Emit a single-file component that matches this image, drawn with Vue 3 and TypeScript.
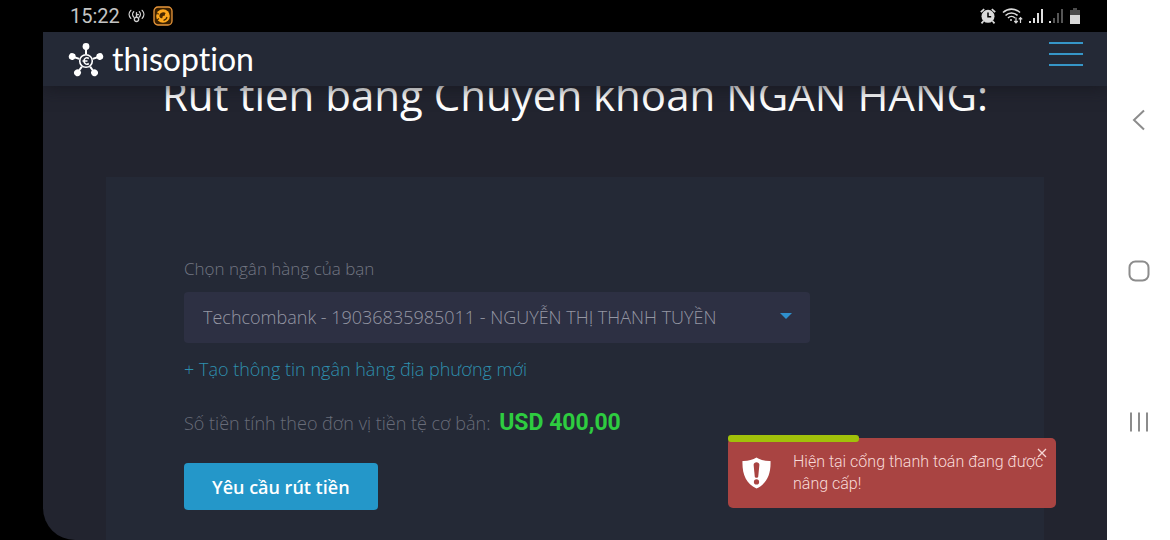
<script setup lang="ts">
import { ref } from 'vue'

const banks: string[] = ['Techcombank - 19036835985011 - NGUYỄN THỊ THANH TUYỀN']
const bank = ref<string>(banks[0])
const toastOpen = ref<boolean>(true)
const progress = ref<number>(40)
const spokes: number[] = [0, 72, 144, 216, 288]
</script>

<template>
  <div class="device">
    <div class="screen">
      <div class="status">
        <div class="status-group">
          <span class="clock">15:22</span>
          <svg class="ico-cast" viewBox="0 0 18 16" fill="none" stroke="#d0d0d0" stroke-width="1.4" stroke-linecap="round">
            <path d="M3 2C.6 4.500.6 8 3 10.500M6 3.500C4.500 5 4.500 7.500 6 9M15 2c2.400 2.500 2.400 6 0 8.500M12 3.500c1.500 1.500 1.500 4 0 5.500M9 4.500V9M9 6.500h2" />
            <circle cx="9" cy="11.500" r="2.300" />
          </svg>
          <svg class="ico-app" viewBox="0 0 20 20" fill="none">
            <rect x="1" y="1" width="18" height="18" rx="4" fill="#3a2000" stroke="#e8963a" stroke-width="1.300" />
            <circle cx="10" cy="10" r="6.800" fill="#ffa81c" />
            <path d="M6.500 9c1-2.500 4-3.500 6.500-1.800-1.500.3-1 1.500-1 2.300-2 0-3 1-2.500 2.500-1.800.8-3.600-.8-3-3z" fill="#4a2900" />
            <path d="M3 7.500l3 .5M14 11c-.5 2-1.500 3-3.500 3.300M4 14l2-1.500" stroke="#4a2900" stroke-width="1.200" />
          </svg>
        </div>
        <div class="status-group right">
          <svg class="ico-alarm" viewBox="0 0 16 16" fill="none" stroke="#dadada">
            <path d="M.8 4.200l3.400-3M15.200 4.200l-3.400-3M3.500 13l-2 2.300M12.500 13l2 2.300" stroke-width="1.800" />
            <circle cx="8" cy="8.300" r="6.500" fill="#dadada" stroke="none" />
            <path d="M8 4.500v4.200h3.200" stroke="#000" stroke-width="1.500" />
          </svg>
          <svg class="ico-wifi" viewBox="0 0 21 16" fill="none" stroke="#dadada" stroke-width="1.600">
            <path d="M1 4.500c5-4.500 12-4.500 17 0M3.500 7.500c3.500-3.400 8.500-3.400 12 0M6 10c2-2 5-2 7 0" />
            <circle cx="9" cy="12" r="1" fill="#dadada" stroke="none" />
            <path d="M14 9.500v5M12.300 13l1.700 1.800L15.700 13M18.500 15V9.500M16.800 11.300l1.700-1.800 1.700 1.800" stroke-width="1.200" />
          </svg>
          <svg class="ico-signal" viewBox="0 0 14 16" fill="#e0e0e0">
            <path d="M0 13h2v2H0zM4 10h2v5H4zM8 5h2v10H8zM12 1h2v14h-2z" />
          </svg>
          <svg class="ico-signal" viewBox="0 0 14 16" fill="#555">
            <path d="M0 13h2v2H0z" fill="#ddd" />
            <path d="M4 10h2v5H4zM8 5h2v10H8zM12 1h2v14h-2z" />
          </svg>
          <svg class="ico-battery" viewBox="0 0 12 16">
            <path d="M4 0h4v2h3v5H1V2h3z" fill="#4c4c4c" />
            <path d="M1 7h10v9H1z" fill="#d8d8d8" />
          </svg>
        </div>
      </div>

      <div class="app">
        <header class="topbar">
          <a class="brand" href="#">
            <svg class="mark" viewBox="0 0 36 36" fill="none">
              <g v-for="a in spokes" :key="a" :transform="`rotate(${a} 18 20)`">
                <path d="M18 7v6" stroke="#fff" stroke-width="2" />
                <circle cx="18" cy="5.500" r="3.400" fill="#fff" />
              </g>
              <circle cx="18" cy="20" r="6.300" fill="#242936" stroke="#fff" stroke-width="1.600" />
              <path d="M20.800 17.500c-2.300-1.600-4.800-.2-4.800 2.500s2.500 4.100 4.800 2.500M14.500 20h5" stroke="#fff" stroke-width="1.600" />
            </svg>
            <span>thisoption</span>
          </a>
          <button class="menu" type="button" aria-label="Menu"><i></i><i></i><i></i></button>
        </header>

        <main class="content">
          <h1>Rút tiền bằng Chuyển khoản NGÂN HÀNG:</h1>
          <form class="card" @submit.prevent>
            <label for="bank">Chọn ngân hàng của bạn</label>
            <div class="select-wrap">
              <select id="bank" v-model="bank">
                <option v-for="b in banks" :key="b" :value="b">{{ b }}</option>
              </select>
              <svg class="caret" viewBox="0 0 12 6"><path d="M0 0h12L6 6z" fill="#2f8fcc" /></svg>
            </div>
            <a class="add" href="#">+ Tạo thông tin ngân hàng địa phương mới</a>
            <p class="amount">Số tiền tính theo đơn vị tiền tệ cơ bản: <strong>USD 400,00</strong></p>
            <button class="submit" type="submit">Yêu cầu rút tiền</button>
          </form>
        </main>
      </div>

      <div v-if="toastOpen" class="toast" role="alert">
        <div class="progress" :style="{ width: progress + '%' }"></div>
        <svg class="shield" viewBox="0 0 30 32">
          <path d="M15 0c4 2.500 9 3.700 14.500 3.500C30 17 26 27 15 32 4 27 0 17 .5 3.500 6 3.700 11 2.500 15 0z" fill="#fff" />
          <path d="M12 7.500c0-3.500 6-3.500 6 0l-1.200 12c-.3 2-3.300 2-3.600 0z" fill="#a94442" />
          <circle cx="15" cy="25.200" r="2.700" fill="#a94442" />
        </svg>
        <p>Hiện tại cổng thanh toán đang được nâng cấp!</p>
        <button class="close" type="button" aria-label="Đóng" @click="toastOpen = false">
          <svg viewBox="0 0 10 10" fill="none" stroke="#f6d5d3" stroke-width="1.300"><path d="M1 1l8 8M9 1L1 9" /></svg>
        </button>
      </div>
    </div>

    <nav class="softkeys">
      <button type="button" aria-label="Quay lại">
        <svg viewBox="0 0 24 24"><path d="M17 2.500L7 12l10 9.500" /></svg>
      </button>
      <button type="button" aria-label="Trang chủ">
        <svg viewBox="0 0 24 24"><rect x="2.500" y="2.500" width="19" height="19" rx="6" /></svg>
      </button>
      <button type="button" aria-label="Ứng dụng gần đây">
        <svg viewBox="0 0 24 24"><path d="M4 2.500v19M12 2.500v19M20 2.500v19" /></svg>
      </button>
    </nav>
  </div>
</template>

<style>
body {
  margin: 0;
  background: #fff;
}
</style>

<style scoped>
* {
  box-sizing: border-box;
}

button {
  border: 0;
  padding: 0;
  background: none;
  cursor: pointer;
}

svg {
  display: block;
  flex: none;
}

.device {
  display: flex;
  height: 100vh;
  font-family: "Open Sans", "Noto Sans", sans-serif;
}

.screen {
  position: relative;
  flex: 1;
  min-width: 0;
  display: flex;
  flex-direction: column;
  background: #000;
  overflow: hidden;
}

.status {
  flex: none;
  height: 32px;
  padding: 0 26px 0 70px;
  display: flex;
  align-items: center;
  justify-content: space-between;
}

.status-group {
  display: flex;
  align-items: center;
  gap: 8px;
}

.status-group.right {
  gap: 6px;
}

.clock {
  font-family: Roboto, sans-serif;
  font-size: 20px;
  line-height: 32px;
  color: #c4c4c4;
}

.ico-cast { width: 17px; height: 16px; }
.ico-app { width: 20px; height: 20px; }
.ico-alarm { width: 16px; height: 16px; }
.ico-wifi { width: 21px; height: 16px; }
.ico-signal { width: 14px; height: 16px; }
.ico-battery { width: 12px; height: 16px; }

.app {
  flex: 1;
  min-height: 0;
  margin-left: 43px;
  display: flex;
  flex-direction: column;
  background: #22242f;
  border-bottom-left-radius: 32px;
  overflow: hidden;
}

.topbar {
  position: relative;
  z-index: 1;
  flex: none;
  height: 54px;
  padding: 0 24px 0 25px;
  display: flex;
  align-items: center;
  justify-content: space-between;
  background: #242936;
  box-shadow: 0 2px 16px rgba(20, 21, 29, 0.7);
}

.brand {
  display: flex;
  align-items: center;
  gap: 8px;
  color: #fff;
  text-decoration: none;
  font-family: Lato, sans-serif;
  font-size: 32px;
  line-height: 40px;
  font-variant-ligatures: none;
}

.mark {
  width: 36px;
  height: 36px;
}

.menu {
  width: 34px;
  height: 24px;
  margin-bottom: 10px;
  display: flex;
  flex-direction: column;
  justify-content: space-between;
}

.menu i {
  width: 100%;
  height: 2px;
  background: #3696c8;
}

.content {
  flex: 1;
  min-height: 0;
  display: flex;
  flex-direction: column;
  padding: 0 63px;
}

h1 {
  margin: -21px 0 52px;
  font-size: 42px;
  line-height: 60px;
  font-weight: 400;
  color: #fff;
  text-align: center;
  white-space: nowrap;
}

.card {
  flex: 1 0 auto;
  padding: 80px 78px 30px;
  background: #242936;
}

label,
.add,
.amount {
  display: block;
  font-size: 18px;
  line-height: 24px;
  font-weight: 300;
}

label {
  font-size: 17px;
  color: #727682;
}

.select-wrap {
  position: relative;
  width: 80%;
  margin: 11px 0 14px;
}

select {
  appearance: none;
  display: block;
  width: 100%;
  height: 51px;
  padding: 0 40px 2px 19px;
  border: 0;
  border-radius: 4px;
  background: #2d3043;
  color: #9597a3;
  font: 300 18px "Open Sans", "Noto Sans", sans-serif;
}

.caret {
  position: absolute;
  right: 18px;
  top: 21px;
  width: 12px;
  height: 6px;
  pointer-events: none;
}

.add {
  width: fit-content;
  color: #2e8fae;
  text-decoration: none;
}

.amount {
  margin: 30px 0 28px;
  color: #686c79;
}

.amount strong {
  margin-left: 4px;
  font-family: Roboto, sans-serif;
  font-size: 23px;
  font-weight: 700;
  color: #2ecc40;
}

.submit {
  height: 47px;
  padding: 0 28px;
  border-radius: 4px;
  background: #2497c9;
  color: #fff;
  font: 600 18px "Open Sans", "Noto Sans", sans-serif;
}

.toast {
  position: absolute;
  z-index: 2;
  right: 51px;
  bottom: 32px;
  width: 328px;
  padding: 13px 12px 13px 14px;
  display: flex;
  align-items: center;
  gap: 22px;
  background: #a94442;
  border-radius: 5px;
  color: #f8dad8;
}

.progress {
  position: absolute;
  left: 0;
  top: -3px;
  height: 7px;
  border-radius: 3px;
  background: #a1c10a;
}

.shield {
  width: 29px;
  height: 32px;
}

.toast p {
  margin: 0;
  font: 300 16px/22px Roboto, sans-serif;
}

.close {
  position: absolute;
  right: 9px;
  top: 10px;
}

.close svg {
  width: 10px;
  height: 10px;
}

.softkeys {
  flex: none;
  width: 63px;
  display: flex;
  flex-direction: column;
  align-items: center;
  justify-content: space-between;
  padding: 108px 0 106px;
  background: #fff;
}

.softkeys svg {
  width: 24px;
  height: 24px;
  fill: none;
  stroke: #8c8c8c;
  stroke-width: 2;
}
</style>
